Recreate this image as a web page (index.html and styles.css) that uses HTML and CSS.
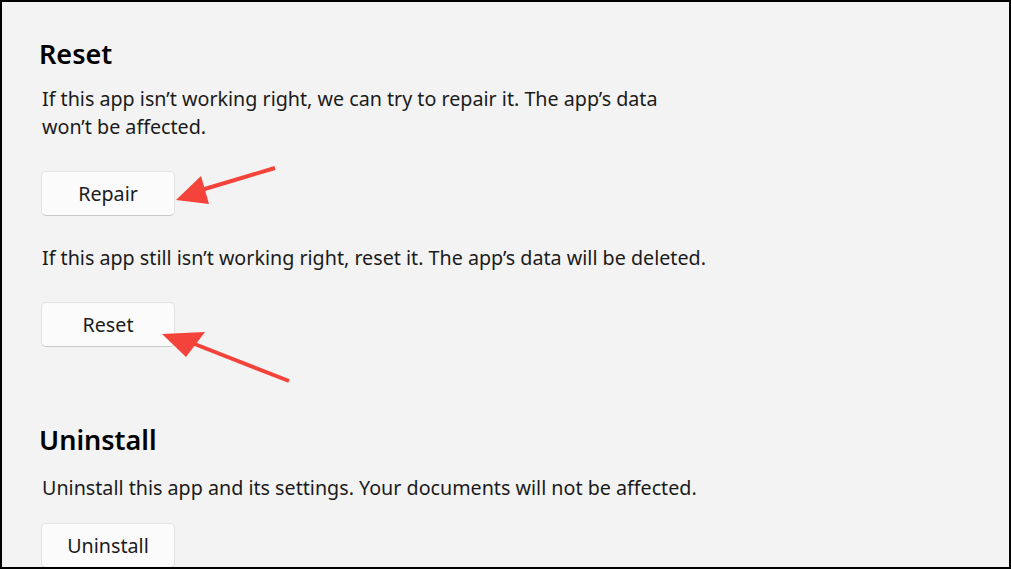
FILE: index.html
```html
<!DOCTYPE html>
<html lang="en">

<head>
    <meta charset="UTF-8">
    <meta name="viewport" content="width=device-width, initial-scale=1.0">
    <title>App settings</title>
    <link rel="stylesheet" href="styles.css">
</head>

<body>
    <div class="page">
        <!-- Reset section -->
        <section class="section">
            <h2>Reset</h2>
            <p>If this app isn’t working right, we can try to repair it. The app’s data<br>won’t be affected.</p>
            <button class="btn">Repair</button>
            <p class="second">If this app still isn’t working right, reset it. The app’s data will be deleted.</p>
            <button class="btn">Reset</button>
        </section>

        <!-- Uninstall section -->
        <section class="section uninstall">
            <h2>Uninstall</h2>
            <p>Uninstall this app and its settings. Your documents will not be affected.</p>
            <button class="btn">Uninstall</button>
        </section>

        <!-- annotation arrows -->
        <svg class="arrows" width="1007" height="565" viewBox="2 2 1007 565">
            <line x1="275" y1="168" x2="198" y2="191" stroke="#f4433a" stroke-width="4" />
            <polygon points="176,200 201,176 209,204" fill="#f4433a" />
            <line x1="289" y1="381" x2="192" y2="343" stroke="#f4433a" stroke-width="4" />
            <polygon points="162,334 205,332 186,357" fill="#f4433a" />
        </svg>
    </div>
</body>

</html>
```

FILE: styles.css
```css
* {
    box-sizing: border-box;
}

body {
    margin: 0;
    background: #000;
    font-family: "Segoe UI", "Noto Sans", sans-serif;
    color: #1b1b1b;
}

.page {
    position: relative;
    height: 569px;
    margin: 0;
    border: 2px solid #000;
    background: #f3f3f3;
    padding: 0 0 0 39px;
    overflow: hidden;
}

.section h2 {
    font-size: 27px;
    font-weight: 600;
    line-height: 36px;
    margin: 0 0 13px -2px;
    color: #000;
}

.section p {
    font-size: 19.7px;
    line-height: 28px;
    margin: 0;
    padding-left: 1px;
}

.section:first-child {
    padding-top: 34px;
}

.btn {
    display: block;
    width: 134px;
    height: 45px;
    margin: 0;
    background: #fbfbfb;
    border: 1px solid #e3e3e3;
    border-bottom-color: #c9c9c9;
    border-radius: 5px;
    font-family: inherit;
    font-size: 19.7px;
    color: #1b1b1b;
    padding: 0;
    cursor: pointer;
}

.section p + .btn {
    margin-top: 30px;
}

.section .second {
    margin-top: 28px;
}

.uninstall {
    padding-top: 75px;
}

.uninstall h2 {
    margin-bottom: 16px;
}

.uninstall p + .btn {
    margin-top: 21px;
}

.arrows {
    position: absolute;
    left: 0;
    top: 0;
}
```
